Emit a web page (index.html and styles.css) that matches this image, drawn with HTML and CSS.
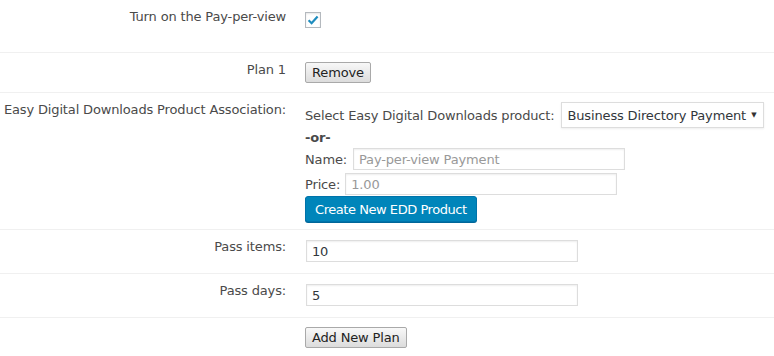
FILE: index.html
```html
<!DOCTYPE html>
<html>
<head>
<meta charset="utf-8">
<link rel="stylesheet" href="styles.css">
</head>
<body>
<div class="form">
  <div class="row row-toggle">
    <div class="label">Turn on the Pay-per-view</div>
    <div class="field">
      <span class="check"><svg width="12" height="12" viewBox="0 0 12 12"><path d="M1.6 6.2 L4.6 9.2 L10.6 2.4" fill="none" stroke="#1e8cbe" stroke-width="2.2"/></svg></span>
    </div>
  </div>
  <div class="row row-plan">
    <div class="label">Plan 1</div>
    <div class="field"><button class="btn">Remove</button></div>
  </div>
  <div class="row row-edd">
    <div class="label">Easy Digital Downloads Product Association:</div>
    <div class="field edd">
      <div class="line select-line">
        <span>Select Easy Digital Downloads product:</span>
        <span class="select">Business Directory Payment <span class="arrow">▼</span></span>
      </div>
      <div class="or">-or-</div>
      <div class="line name-line">
        <span>Name:</span>
        <input class="input" type="text" placeholder="Pay-per-view Payment">
      </div>
      <div class="line price-line">
        <span>Price:</span>
        <input class="input" type="text" placeholder="1.00">
      </div>
      <button class="btn-primary">Create New EDD Product</button>
    </div>
  </div>
  <div class="row row-pass">
    <div class="label">Pass items:</div>
    <div class="field"><input class="input" type="text" value="10"></div>
  </div>
  <div class="row row-pass">
    <div class="label">Pass days:</div>
    <div class="field"><input class="input" type="text" value="5"></div>
  </div>
  <div class="row row-last">
    <div class="label"></div>
    <div class="field"><button class="btn">Add New Plan</button></div>
  </div>
</div>
</body>
</html>
```

FILE: styles.css
```css
html, body {
  margin: 0;
  padding: 0;
  background: #fff;
}
body {
  font-family: "DejaVu Sans", Verdana, sans-serif;
  font-size: 13px;
  letter-spacing: -0.15px;
  color: #4a4a4a;
}
.form {
  display: flex;
  flex-direction: column;
}
.row {
  display: grid;
  grid-template-columns: 286px 1fr;
  column-gap: 19px;
  padding-top: 9px;
  border-bottom: 1px solid #f0f0f0;
  align-items: start;
}
.row-last { border-bottom: none; }
.label {
  text-align: right;
  line-height: 16px;
}
.row-toggle { height: 43px; }
.row-plan { height: 30px; }
.row-edd { height: 127px; }
.row-pass { height: 34px; }
.field {
  display: flex;
  align-items: flex-start;
}
.check {
  margin-top: 3px;
  width: 14px;
  height: 14px;
  border: 1px solid #b4b9be;
  box-shadow: inset 0 1px 2px rgba(0,0,0,.1);
  display: flex;
  align-items: center;
  justify-content: center;
  background: #fff;
}
.btn {
  font-family: "DejaVu Sans", Verdana, sans-serif;
  font-size: 13px;
  letter-spacing: -0.15px;
  color: #222;
  height: 21px;
  padding: 0 6px;
  border: 1px solid #a9a9a9;
  border-radius: 2px;
  background: linear-gradient(#f8f8f8, #dcdcdc);
  line-height: 18px;
  white-space: nowrap;
}
.edd {
  flex-direction: column;
}
.line {
  display: flex;
  align-items: center;
  white-space: nowrap;
}
.select-line { height: 26px; }
.select {
  margin-left: 6px;
  height: 24px;
  width: 195px;
  border: 1px solid #ddd;
  box-shadow: 0 1px 2px rgba(0,0,0,.07);
  padding-left: 6px;
  display: flex;
  align-items: center;
  color: #32373c;
  position: relative;
}
.arrow {
  font-size: 7px;
  position: absolute;
  right: 6px;
  top: 8px;
  color: #333;
}
.or {
  font-weight: bold;
  line-height: 16px;
  margin-top: 2px;
}
.input {
  box-sizing: border-box;
  width: 272px;
  height: 22px;
  border: 1px solid #ddd;
  box-shadow: inset 0 1px 2px rgba(0,0,0,.07);
  font-family: "DejaVu Sans", Verdana, sans-serif;
  font-size: 13px;
  letter-spacing: -0.15px;
  color: #32373c;
  padding: 0 5px;
  margin: 0;
  outline: none;
}
.input::placeholder { color: #999; opacity: 1; }
.name-line { margin-top: 2px; }
.name-line .input { margin-left: 6px; }
.price-line { margin-top: 3px; }
.price-line .input { margin-left: 5px; }
.row-pass .input { margin-top: 1px; margin-left: 1px; }
.btn-primary {
  margin-top: 1px;
  align-self: flex-start;
  height: 26px;
  background: #0085ba;
  border: 1px solid #0073aa;
  border-radius: 3px;
  color: #fff;
  font-family: "DejaVu Sans", Verdana, sans-serif;
  font-size: 13px;
  letter-spacing: -0.45px;
  padding: 0 9px;
  box-shadow: 0 1px 0 #006799;
  white-space: nowrap;
}
```
